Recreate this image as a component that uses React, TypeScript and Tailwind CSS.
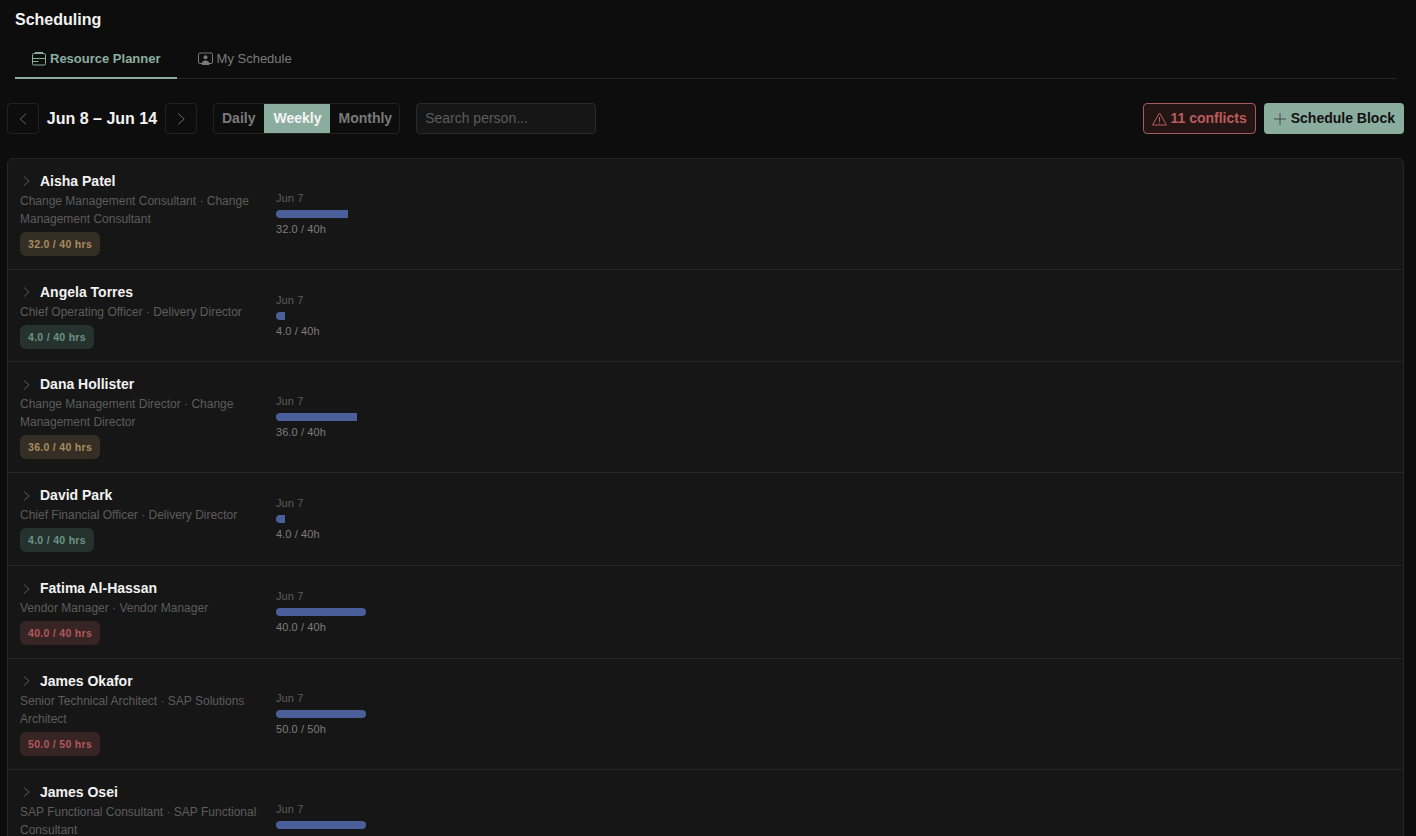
type Person = {
  name: string
  role: string
  hours: number
  cap: number
  tone: 'amber' | 'green' | 'red'
}

const people: Person[] = [
  { name: 'Aisha Patel', role: 'Change Management Consultant · Change Management Consultant', hours: 32, cap: 40, tone: 'amber' },
  { name: 'Angela Torres', role: 'Chief Operating Officer · Delivery Director', hours: 4, cap: 40, tone: 'green' },
  { name: 'Dana Hollister', role: 'Change Management Director · Change Management Director', hours: 36, cap: 40, tone: 'amber' },
  { name: 'David Park', role: 'Chief Financial Officer · Delivery Director', hours: 4, cap: 40, tone: 'green' },
  { name: 'Fatima Al-Hassan', role: 'Vendor Manager · Vendor Manager', hours: 40, cap: 40, tone: 'red' },
  { name: 'James Okafor', role: 'Senior Technical Architect · SAP Solutions Architect', hours: 50, cap: 50, tone: 'red' },
  { name: 'James Osei', role: 'SAP Functional Consultant · SAP Functional Consultant', hours: 40, cap: 40, tone: 'red' },
]

const tones = {
  amber: 'bg-[#342e25] text-[#a98c5f]',
  green: 'bg-[#26322e] text-[#6b9484]',
  red: 'bg-[#372424] text-[#b05a5a]',
}

function Chevron({ dir = 'right', h = 10 }: { dir?: 'left' | 'right'; h?: number }) {
  return (
    <svg width={h * 0.7} height={h} viewBox="0 0 7 10" fill="none" stroke="currentColor" strokeWidth="0.8">
      <path d={dir === 'right' ? 'M1 0.5 L6 5 L1 9.500' : 'M6 0.5 L1 5 L6 9.500'} />
    </svg>
  )
}

function PlannerIcon() {
  return (
    <svg width="14" height="14" viewBox="0 0 14 14" fill="none" stroke="currentColor" strokeWidth="1">
      <path d="M3 0.5h8" />
      <rect x="0.500" y="1.500" width="13" height="11.500" rx="1.200" />
      <path d="M0.500 6.500h13M0.500 9.500h6" />
    </svg>
  )
}

function ScheduleIcon() {
  return (
    <svg width="15" height="14" viewBox="0 0 15 14" fill="none" stroke="currentColor" strokeWidth="1">
      <rect x="0.500" y="1" width="14" height="10.500" rx="1.500" />
      <circle cx="7.500" cy="5.200" r="2" fill="currentColor" stroke="none" />
      <path d="M3.800 13v-1.500c0-2 1.500-3 3.700-3s3.700 1 3.700 3V13z" fill="currentColor" stroke="none" />
    </svg>
  )
}

function WarnIcon() {
  return (
    <svg width="15" height="14" viewBox="0 0 15 14" fill="none" stroke="currentColor" strokeWidth="1" strokeLinejoin="round">
      <path d="M7.500 1 L14.500 13 H0.500 Z" />
      <path d="M7.500 5v4.500M7.500 10.500v1" />
    </svg>
  )
}

function PlusIcon() {
  return (
    <svg width="14" height="14" viewBox="0 0 14 14" fill="none" stroke="currentColor" strokeWidth="1">
      <path d="M7 1v12M1 7h12" />
    </svg>
  )
}

function Row({ p }: { p: Person }) {
  return (
    <div className="flex items-center gap-4 border-b border-[#262626] px-3 pt-3 pb-[12.850px] last:border-b-0">
      <div className="w-[240px] shrink-0">
        <div className="flex h-[21px] items-center gap-[10px] pl-[3px]">
          <span className="text-[#6b6b6b]">
            <Chevron />
          </span>
          <span className="text-[14px] font-bold text-[#f2f2f2]">{p.name}</span>
        </div>
        <p className="text-[12px] leading-[18px] text-[#5c5c5c]">{p.role}</p>
        <span className={`mt-1 block w-fit rounded-md px-2 text-[10.500px] leading-6 font-bold tracking-[0.3px] ${tones[p.tone]}`}>
          {p.hours.toFixed(1)} / {p.cap} hrs
        </span>
      </div>
      <div className="mt-[1.200px] w-[90px] shrink-0">
        <p className="text-[11px] leading-[14px] tracking-[0.1px] text-[#5c5c5c]">Jun 7</p>
        <div className="mt-[5px] h-2 w-[90px] overflow-hidden rounded-full">
          <div className="h-full bg-[#4a5f9a]" style={{ width: `${(p.hours / p.cap) * 100}%` }} />
        </div>
        <p className="mt-[3px] text-[11px] leading-[16px] tracking-[0.1px] text-[#7d7d7d]">
          {p.hours.toFixed(1)} / {p.cap}h
        </p>
      </div>
    </div>
  )
}

export default function App() {
  return (
    <div className="h-[836px] overflow-hidden bg-[#0d0d0d] font-['Liberation_Sans',sans-serif]">
      <div className="px-[15px] pt-[10px]">
        <h1 className="text-[16px] leading-[19px] font-bold text-[#f2f2f2]">Scheduling</h1>
        <div className="mt-[11px] mr-[5px] flex border-b border-[#262626]">
          <button className="-mb-px flex h-[39px] items-center gap-1 border-b-2 border-[#8bada0] pr-4 pl-[17px] text-[13px] font-bold text-[#8bada0]">
            <PlannerIcon />
            Resource Planner
          </button>
          <button className="-mb-px flex h-[39px] items-center gap-1 border-b-2 border-transparent pr-5 pl-[21px] text-[13px] text-[#7a7a7a]">
            <ScheduleIcon />
            My Schedule
          </button>
        </div>
      </div>

      <div className="mt-6 flex h-[31px] items-center justify-between pr-3 pl-[7px]">
        <div className="flex items-center">
          <button className="flex h-[31px] w-[32px] items-center justify-center rounded border border-[#222222] text-[#6b6b6b]">
            <Chevron dir="left" h={12} />
          </button>
          <span className="w-[126px] text-center text-[16px] font-bold text-[#f2f2f2]">Jun 8 – Jun 14</span>
          <button className="flex h-[31px] w-[32px] items-center justify-center rounded border border-[#222222] text-[#6b6b6b]">
            <Chevron h={12} />
          </button>
          <div className="ml-4 flex h-[31px] overflow-hidden rounded border border-[#222222] text-[14px] font-bold">
            <span className="flex items-center pr-[9px] pl-2 text-[#7a7a7a]">Daily</span>
            <span className="flex items-center bg-[#8bada0] px-[9px] text-[#f5f5f5]">Weekly</span>
            <span className="flex items-center pr-[7px] pl-2 text-[#7a7a7a]">Monthly</span>
          </div>
          <input
            placeholder="Search person..."
            className="ml-4 h-[31px] w-[180px] rounded border border-[#2a2a2a] bg-[#161616] px-2 pb-px text-[14px] text-[#f2f2f2] outline-none placeholder:text-[#5c5c5c]"
          />
        </div>
        <div className="flex items-center gap-2">
          <button className="flex h-[31px] items-center gap-[3px] rounded border border-[#a85a5a] bg-[#241515] px-2 text-[14px] font-bold text-[#b85c5c]">
            <WarnIcon />
            11 conflicts
          </button>
          <button className="flex h-[31px] items-center gap-1 rounded bg-[#8bada0] px-[9px] text-[14px] font-bold text-[#111111]">
            <span className="text-[#444b48]">
              <PlusIcon />
            </span>
            Schedule Block
          </button>
        </div>
      </div>

      <div className="mt-[23.700px] mr-3 ml-[7px] rounded-md border border-[#262626] bg-[#161616]">
        {people.map(p => (
          <Row key={p.name} p={p} />
        ))}
      </div>
    </div>
  )
}
